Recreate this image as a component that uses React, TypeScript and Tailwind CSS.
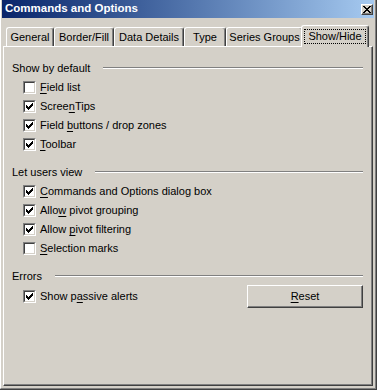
import React from 'react';

const FONT = { fontFamily: '"Liberation Sans", Arial, sans-serif' };

type Item = { pre: string; key: string; post: string; checked: boolean };

const Check: React.FC<{ checked: boolean }> = ({ checked }) => (
  <div className="w-[13px] h-[13px] shrink-0 border border-t-[#808080] border-l-[#808080] border-r-white border-b-white">
    <div className="w-[11px] h-[11px] bg-white border border-t-[#404040] border-l-[#404040] border-r-[#d4d0c8] border-b-[#d4d0c8]">
      {checked && (
        <svg width="9" height="9" viewBox="0 0 9 9" shapeRendering="crispEdges" className="block">
          <path d="M1 3h1v3h-1zM2 4h1v3h-1zM3 5h1v3h-1zM4 4h1v3h-1zM5 3h1v3h-1zM6 2h1v3h-1zM7 1h1v3h-1z" fill="#000" />
        </svg>
      )}
    </div>
  </div>
);

const Label: React.FC<{ item: Item }> = ({ item }) => (
  <span className="whitespace-nowrap">
    {item.pre}
    <span className="underline underline-offset-[2px]">{item.key}</span>
    {item.post}
  </span>
);

const Row: React.FC<{ item: Item }> = ({ item }) => (
  <div className="h-[19px] flex items-center gap-[4px] pl-[11px]">
    <Check checked={item.checked} />
    <Label item={item} />
  </div>
);

const Header: React.FC<{ title: string; className?: string }> = ({ title, className = '' }) => (
  <div className={`h-[14px] flex items-center gap-[13px] ${className}`}>
    <span className="whitespace-nowrap leading-[14px]">{title}</span>
    <div className="flex-1 h-[2px] border-t border-t-[#808080] border-b border-b-white" />
  </div>
);

const showDefault: Item[] = [
  { pre: '', key: 'F', post: 'ield list', checked: false },
  { pre: 'Scree', key: 'n', post: 'Tips', checked: true },
  { pre: 'Field ', key: 'b', post: 'uttons / drop zones', checked: true },
  { pre: '', key: 'T', post: 'oolbar', checked: true },
];

const usersView: Item[] = [
  { pre: '', key: 'C', post: 'ommands and Options dialog box', checked: true },
  { pre: 'Allo', key: 'w', post: ' pivot grouping', checked: true },
  { pre: 'Allow ', key: 'p', post: 'ivot filtering', checked: true },
  { pre: '', key: 'S', post: 'election marks', checked: false },
];

const tabs = [
  { label: 'General', w: 'w-[48px]' },
  { label: 'Border/Fill', w: 'w-[60px]' },
  { label: 'Data Details', w: 'w-[70px]' },
  { label: 'Type', w: 'w-[42px]' },
  { label: 'Series Groups', w: 'w-[77px]' },
];

export default function App() {
  return (
    <div style={FONT} className="w-[377px] h-[390px] bg-[#d4d0c8] border-r border-b border-[#404040] text-[11px] text-black overflow-hidden">
      <div className="h-full border-l border-l-white border-r border-r-[#808080] border-b border-b-[#808080] px-px">
        {/* title bar */}
        <div className="h-[18px] flex items-center justify-between pl-[3px] pr-[1px] bg-gradient-to-r from-[#0a246a] to-[#a6caf0]">
          <span className="text-white font-bold text-[11.5px] leading-none">Commands and Options</span>
          <div className="w-[12px] h-[11px] bg-[#d4d0c8] border border-t-white border-l-white border-r-[#404040] border-b-[#404040] shadow-[inset_-1px_-1px_0_#808080] flex items-center justify-center">
            <svg width="8" height="7" viewBox="0 0 8 7" shapeRendering="crispEdges">
              <path d="M0 0h2v1h-2zM6 0h2v1h-2zM1 1h2v1h-2zM5 1h2v1h-2zM2 2h4v1h-4zM3 3h2v1h-2zM2 4h4v1h-4zM1 5h2v1h-2zM5 5h2v1h-2zM0 6h2v1h-2zM6 6h2v1h-2z" fill="#000" />
            </svg>
          </div>
        </div>

        {/* tabs */}
        <div className="mt-[7px] h-[21px] flex items-end pl-[4px]">
          {tabs.map((t) => (
            <div
              key={t.label}
              className={`${t.w} h-[19px] flex items-center justify-center border-l border-t border-r border-l-white border-t-white border-r-[#404040] rounded-t-[3px] shadow-[inset_-1px_0_0_#808080] whitespace-nowrap`}
            >
              {t.label}
            </div>
          ))}
          <div className="relative z-10 -ml-[2px] -mb-px w-[68px] h-[22px] bg-[#d4d0c8] flex items-start justify-center pt-[3px] border-l border-t border-r border-l-white border-t-white border-r-[#404040] rounded-t-[3px] shadow-[inset_-1px_0_0_#808080]">
            <span className="w-[62px] h-[15px] flex items-center justify-center border border-dotted border-black">Show/Hide</span>
          </div>
        </div>

        {/* panel */}
        <div className="ml-px w-[370px] h-[340px] border border-t-white border-l-white border-r-[#404040] border-b-[#404040] shadow-[inset_-1px_-1px_0_#808080] pt-[14px] pl-[8px] pr-[9px]">
          <Header title="Show by default" />
          <div className="mt-[3px]">
            {showDefault.map((i) => (
              <Row key={i.pre + i.key} item={i} />
            ))}
          </div>

          <Header title="Let users view" className="mt-[11px]" />
          <div className="mt-[3px]">
            {usersView.map((i) => (
              <Row key={i.pre + i.key} item={i} />
            ))}
          </div>

          <Header title="Errors" className="mt-[11px]" />
          <div className="mt-[2px] h-[23px] flex items-center justify-between">
            <div className="flex items-center gap-[4px] pl-[11px]">
              <Check checked />
              <Label item={{ pre: 'Show p', key: 'a', post: 'ssive alerts', checked: true }} />
            </div>
            <button className="w-[116px] h-[23px] bg-[#d4d0c8] border border-t-white border-l-white border-r-[#404040] border-b-[#404040] shadow-[inset_-1px_-1px_0_#808080] flex items-center justify-center">
              <span className="underline underline-offset-[2px]">R</span>eset
            </button>
          </div>
        </div>
      </div>
    </div>
  );
}
